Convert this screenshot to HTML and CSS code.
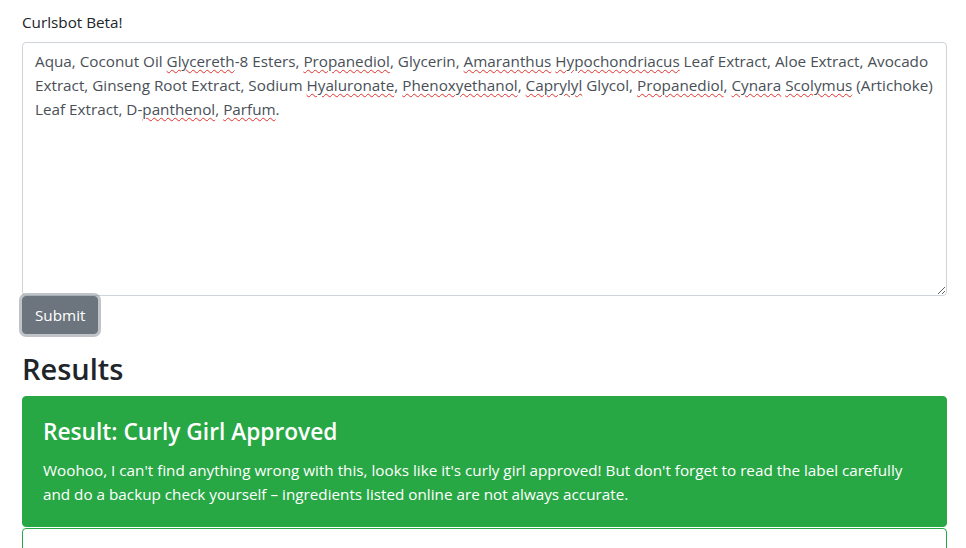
FILE: index.html
```html
<!DOCTYPE html>
<html lang="en">
<head>
<meta charset="utf-8">
<title>Curlsbot Beta!</title>
<link rel="stylesheet" href="styles.css">
</head>
<body>
<main class="page">
  <form class="check-form">
    <label class="form-label" for="ingredients">Curlsbot Beta!</label>
    <div class="textbox" id="ingredients" role="textbox" contenteditable="true" aria-multiline="true">Aqua, Coconut Oil <span class="sp">Glycereth</span>-8 Esters, <span class="sp">Propanediol</span>, Glycerin, <span class="sp">Amaranthus</span> <span class="sp">Hypochondriacus</span> Leaf Extract, Aloe Extract, Avocado Extract, Ginseng Root Extract, Sodium <span class="sp">Hyaluronate</span>, <span class="sp">Phenoxyethanol</span>, <span class="sp">Caprylyl</span> Glycol, <span class="sp">Propanediol</span>, <span class="sp">Cynara</span> <span class="sp">Scolymus</span> (Artichoke) Leaf Extract, D-<span class="sp">panthenol</span>, <span class="sp">Parfum</span>.</div>
    <button type="button" class="btn-submit">Submit</button>
  </form>

  <h2 class="results-title">Results</h2>

  <section class="card card-success">
    <div class="card-body">
      <h4 class="card-title">Result: Curly Girl Approved</h4>
      <p class="card-text">Woohoo, I can't find anything wrong with this, looks like it's curly girl approved! But don't forget to read the label carefully and do a backup check yourself – ingredients listed online are not always accurate.</p>
    </div>
  </section>
  <section class="card card-outline">
    <div class="card-body">&nbsp;</div>
  </section>
</main>
</body>
</html>
```
FILE: styles.css
```css
*{box-sizing:border-box;}
html,body{margin:0;padding:0;}
body{
  font-family:"Open Sans","Noto Sans",sans-serif;
  font-size:15.25px;
  line-height:24px;
  color:#212529;
  background:#fff;
}
.page{padding:10px 19px 0 22px;}
.check-form{display:flex;flex-direction:column;align-items:flex-start;}
.form-label{display:block;margin-bottom:8px;}
.textbox{
  align-self:stretch;
  height:254px;
  padding:6px 12px;
  border:1px solid #ced4da;
  border-radius:4px;
  color:#495057;
  background:#fff;
  overflow:auto;
  resize:vertical;
  outline:none;
}
.sp{
  text-decoration:underline wavy #e0322c;
  text-decoration-thickness:1px;
  text-underline-offset:2px;
}
.btn-submit{
  font:inherit;
  color:#fff;
  background:#6c757d;
  border:1px solid #6c757d;
  border-radius:4px;
  padding:6px 12px;
  height:38px;
  width:76px;
  box-shadow:0 0 0 3px rgba(130,138,145,.5);
  cursor:pointer;
}
.results-title{
  margin:16px 0 8px;
  font-size:29px;
  font-weight:600;
  line-height:38px;
}
.card{
  border-radius:4px;
  border:1px solid #28a745;
}
.card-success{background:#28a745;color:#fff;}
.card-body{padding:20px;}
.card-title{
  margin:0 0 12px;
  font-size:22.7px;
  font-weight:600;
  line-height:29px;
}
.card-text{margin:0;}
.card-outline{background:#fff;margin-top:1px;}
```
